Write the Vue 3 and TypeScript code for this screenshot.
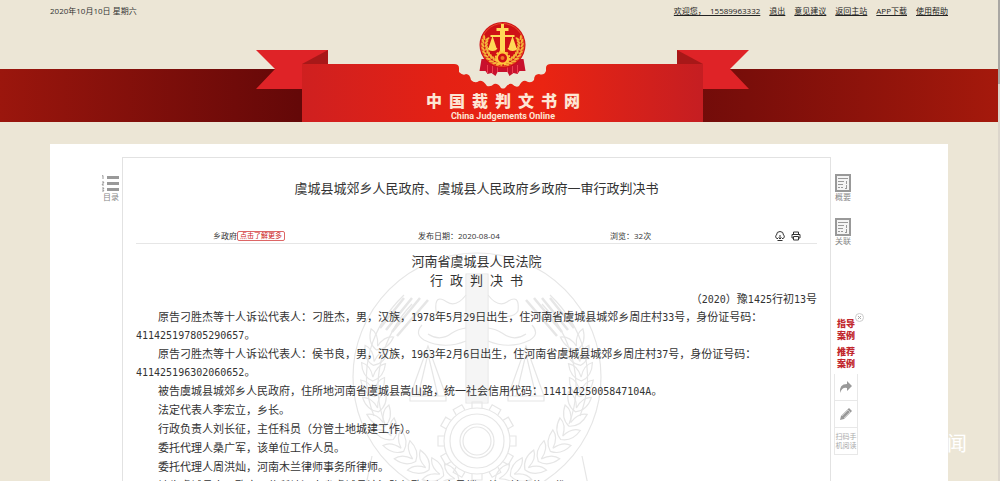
<script setup lang="ts">
interface Paragraph {
  parts: string[]
}

interface Leaf {
  x: number
  y: number
  angle: number
}

const links: string[] = ['退出', '意见建议', '返回主站', 'APP下载', '使用帮助']
const siteName: string[] = [...'中国裁判文书网']

const source: string[] = [
  '原告刁胜杰等十人诉讼代表人：刁胜杰，男，汉族，1978年5月29日出生，住河南省虞城县城郊乡周庄村33号，身份证号码：411425197805290657。',
  '原告刁胜杰等十人诉讼代表人：侯书良，男，汉族，1963年2月6日出生，住河南省虞城县城郊乡周庄村37号，身份证号码：411425196302060652。',
  '被告虞城县城郊乡人民政府，住所地河南省虞城县嵩山路，统一社会信用代码：11411425005847104A。',
  '法定代表人李宏立，乡长。',
  '行政负责人刘长征，主任科员（分管土地城建工作）。',
  '委托代理人桑广军，该单位工作人员。',
  '委托代理人周洪灿，河南木兰律师事务所律师。',
  '被告虞城县人民政府，住所地河南省虞城县漓江路行政中心六号楼，统一社会信用代码：',
]

const splitDigits = (text: string): string[] => text.split(/([0-9A-Z]+)/).filter(Boolean)
const isDigits = (part: string): boolean => /^[0-9A-Z]+$/.test(part)
const paragraphs: Paragraph[] = source.map((text) => ({ parts: splitDigits(text) }))
const caseNumber: string[] = splitDigits('（2020）豫1425行初13号')

const wreath = (cx: number, cy: number, r: number, from: number, to: number, count: number): Leaf[] =>
  Array.from({ length: count }, (_, i) => {
    const deg = from + ((to - from) * i) / (count - 1)
    const rad = (deg * Math.PI) / 180
    return { x: cx + r * Math.cos(rad), y: cy + r * Math.sin(rad), angle: deg + 90 }
  })

const bigWreath: Leaf[] = wreath(127, 127, 104, 105, 200, 12)
const smallWreath: Leaf[] = wreath(0, 0, 18, 105, 205, 10)
const teeth: number[] = Array.from({ length: 12 }, (_, i) => i * 30)
</script>

<template>
  <div class="window" lang="zh-CN">
    <div class="page">
      <header>
        <div class="topbar">
          <span>2020年10月10日 星期六</span>
          <nav>
            <a href="#">欢迎您，&nbsp; 15589963332</a>
            <a v-for="link in links" :key="link" href="#">{{ link }}</a>
          </nav>
        </div>

        <div class="banner">
          <svg class="ribbon" width="502" height="101" viewBox="248 21 502 101" aria-hidden="true">
            <defs>
              <linearGradient id="front" x1="0" x2="1" y1="0" y2="0">
                <stop offset="0" stop-color="#cf2020" />
                <stop offset="0.35" stop-color="#e42114" />
                <stop offset="0.6" stop-color="#ea2412" />
                <stop offset="1" stop-color="#c51e22" />
              </linearGradient>
            </defs>
            <path d="M256 50H328V89H256L275 69Z" fill="#df2327" />
            <path d="M749 50H677V89H749L730 69Z" fill="#df2327" />
            <path d="M328 50L302 64H328Z" fill="#a81818" />
            <path d="M677 50L703 64H677Z" fill="#a81818" />
            <path d="M440 60H565V92H440Z" fill="#ece6d6" />
            <path
              d="M302 64H454Q459 64 459 68V72Q463 76 466 74Q470 74 471 80Q475 84 479 81Q483 80 487 86Q491 87 494 84Q498 83 501 88Q503 89 505 88Q508 83 512 84Q516 88 519 86Q522 80 526 81Q531 84 534 80Q534 74 539 74Q544 76 546 71V68Q546 64 551 64H703V122H302Z"
              fill="url(#front)"
            />
            <g transform="translate(502.500 45)">
              <path d="M-21 14L-23 26L-17 26L-15 29L-11 28L-7 31L-5 27H5L7 31L11 28L15 29L17 26L23 26L21 14Z" fill="#c8112d" />
              <path d="M-15 20V28M-10 21V28M-5 22V27M5 22V27M10 21V28M15 20V28" stroke="#ee4050" fill="none" />
              <circle r="23" fill="#cf1116" />
              <circle r="21.500" fill="none" stroke="#ea4b2b" stroke-width="1" />
              <g fill="#f5b43a">
                <template v-for="side in [1, -1]" :key="side">
                  <g :transform="`scale(${side} 1)`">
                    <g v-for="(leaf, i) in smallWreath" :key="i" :transform="`translate(${leaf.x} ${leaf.y}) rotate(${leaf.angle})`">
                      <ellipse cx="0" cy="-2" rx="2.600" ry="1.100" transform="rotate(-30)" />
                      <ellipse cx="0" cy="2" rx="2.600" ry="1.100" transform="rotate(30)" />
                    </g>
                  </g>
                </template>
              </g>
              <g fill="#ffd957">
                <path d="M-1.500 -21H1.500V-17H6V-14H2.500V-10H12V-8H2.500V7H4V9H-4V7H-2.500V-8H-12V-10H-2.500V-14H-6V-17H-1.500Z" />
                <path d="M-10 -9L-14 3H-6ZM10 -9L6 3H14Z" />
                <path d="M-15 3H-5Q-6 6 -10 6Q-14 6 -15 3ZM5 3H15Q14 6 10 6Q6 6 5 3Z" />
              </g>
              <circle cy="13" r="5.500" fill="#cf1116" stroke="#ffc83d" stroke-width="2" />
              <circle cy="13" r="7" fill="none" stroke="#ffc83d" stroke-width="1.500" stroke-dasharray="2 1.700" />
              <circle cy="13" r="2" fill="#ef7a25" />
            </g>
          </svg>
          <div class="brand">
            <h1><span v-for="char in siteName" :key="char">{{ char }}</span></h1>
            <p>China Judgements Online</p>
          </div>
        </div>
      </header>

      <main>
        <aside class="left-rail">
          <button type="button" class="tool">
            <svg width="18" height="18" viewBox="0 0 18 18" aria-hidden="true">
              <path d="M6 3.500H18M6 9.500H18M6 15.500H18" stroke="#999" stroke-width="3" />
              <path d="M1 2L2 1.500V5M1 8H3L1 11H3M1 14H3L2 15.500L3 17H1" stroke="#999" fill="none" />
            </svg>
            目录
          </button>
        </aside>

        <article>
          <svg class="watermark" width="254" height="254" viewBox="0 0 254 254" aria-hidden="true">
            <path d="M117 25H137V152H117Z" fill="#f5f5f5" />
            <g fill="none" stroke="#e6e6e6" stroke-width="1.200">
              <circle cx="127" cy="127" r="124" />
              <template v-for="side in [1, -1]" :key="side">
                <g :transform="`translate(${side === 1 ? 0 : 254} 0) scale(${side} 1)`">
                  <path d="M24 166C6 120 22 76 54 45M35 174C18 130 34 84 62 54" />
                  <path
                    v-for="(leaf, i) in bigWreath"
                    :key="i"
                    :transform="`translate(${leaf.x} ${leaf.y}) rotate(${leaf.angle})`"
                    d="M-9 0Q-5 -11 9 -12Q7 -3 -5 0Q7 3 9 12Q-5 11 -9 0Z"
                  />
                  <path d="M30 78L54 48M36 80L62 48M42 82L70 48M47 86L78 50" stroke-width="2.500" />
                  <path d="M78 84Q90 92 102 83Q108 79 116 78M72 75Q64 84 74 90Q94 100 116 91" />
                  <path d="M78 96L60 146H96ZM78 104L68 146M78 104L88 146M60 146V151H96V146" />
                  <path d="M116 45Q106 58 97 52Q84 43 86 61Q90 68 104 66H116" />
                  <path d="M22 206L15 240L34 232L48 248" />
                </g>
              </template>
              <path d="M116 24H138V153H116Z" />
              <g transform="translate(127 191)">
                <path v-for="angle in teeth" :key="angle" :transform="`rotate(${angle})`" d="M-5 -33V-39H5V-33" />
                <circle r="33" />
                <circle r="27" />
                <circle r="17" />
                <circle r="14" />
              </g>
            </g>
          </svg>

          <h2>虞城县城郊乡人民政府、虞城县人民政府乡政府一审行政判决书</h2>
          <div class="meta">
            <span class="court">乡政府<button type="button" class="more">点击了解更多</button></span>
            <span>发布日期：2020-08-04</span>
            <span>浏览：32次</span>
            <span class="actions">
              <button type="button" aria-label="下载">
                <svg width="10" height="10" viewBox="0 0 10 10">
                  <path d="M3 7.500H2A2 2 0 0 1 1.500 4A3.500 3.500 0 0 1 8.500 4A2 2 0 0 1 8 7.500H7M5 4V8M3.500 6.500L5 8L6.500 6.500M2.500 9.500H7.500" />
                </svg>
              </button>
              <button type="button" aria-label="打印">
                <svg width="10" height="10" viewBox="0 0 10 10">
                  <path d="M2.500 3V1H7.500V3M2.500 7H1V3.500H9V7H7.500M2.500 5.500H7.500V9H2.500Z" />
                </svg>
              </button>
            </span>
          </div>

          <div class="document">
            <p class="heading">河南省虞城县人民法院</p>
            <p class="heading spaced"><span v-for="char in '行政判决书'" :key="char">{{ char }}</span></p>
            <p class="case">
              <template v-for="(part, i) in caseNumber" :key="i"><span v-if="isDigits(part)" class="num">{{ part }}</span><template v-else>{{ part }}</template></template>
            </p>
            <p v-for="(paragraph, n) in paragraphs" :key="n" class="para">
              <template v-for="(part, i) in paragraph.parts" :key="i"><span v-if="isDigits(part)" class="num">{{ part }}</span><template v-else>{{ part }}</template></template>
            </p>
          </div>
        </article>

        <aside class="right-rail">
          <button v-for="label in ['概要', '关联']" :key="label" type="button" class="tool">
            <svg width="16" height="18" viewBox="0 0 16 18" aria-hidden="true">
              <path d="M1 1H15V17H1Z" fill="#f4f4f4" stroke="#999" stroke-width="2" />
              <path d="M3 4.500H13M3 7.500H9M3 10.500H8M3 13.500H5M6 13.500H8M11.500 7V10M11.500 11V15M10 14.500H12" stroke="#999" fill="none" />
            </svg>
            {{ label }}
          </button>

          <div class="float">
            <button type="button" class="close" aria-label="关闭">
              <svg width="9" height="9" viewBox="0 0 9 9">
                <circle cx="4.500" cy="4.500" r="4" fill="#fff" stroke="#ccc" />
                <path d="M3 3L6 6M6 3L3 6" stroke="#aaa" />
              </svg>
            </button>
            <a href="#" class="cases">指导<br />案例</a>
            <a href="#" class="cases">推荐<br />案例</a>
            <button type="button" class="box" aria-label="分享">
              <svg width="14" height="14" viewBox="0 0 14 14">
                <path d="M1 13Q0 4 8 4V1L13 6L8 11V8Q3 7 1 13Z" fill="#999" />
              </svg>
            </button>
            <button type="button" class="box" aria-label="编辑">
              <svg width="14" height="14" viewBox="0 0 14 14">
                <path d="M1 13L2 9L10 1L13 4L5 12Z" fill="#999" />
                <path d="M3 9L9 3M5 11L11 5M8.500 2.500L11.500 5.500" stroke="#ddd" stroke-width="0.700" />
              </svg>
            </button>
            <button type="button" class="box scan">扫码手<br />机阅读</button>
          </div>
        </aside>

        <span class="stamp">闻</span>
      </main>
    </div>
    <div class="scrollbar"><div class="thumb"></div></div>
  </div>
</template>

<style>
html,
body {
  margin: 0;
  background: #ece6d6;
}
</style>

<style scoped>
.window {
  display: grid;
  grid-template-columns: 1fr 2px;
  height: 100vh;
  overflow: hidden;
  font-family: 'Open Sans', 'Noto Sans CJK SC', sans-serif;
  font-size: 8px;
  color: #333;
}

.page {
  display: flex;
  flex-direction: column;
  min-width: 0;
}

.scrollbar {
  background: #dcd6cc;
}

.thumb {
  height: 84px;
  background: #a9a7a3;
}

p,
h1,
h2 {
  margin: 0;
  font-weight: 400;
}

button {
  padding: 0;
  border: 0;
  background: none;
  font: inherit;
  color: inherit;
  cursor: pointer;
}

svg {
  display: block;
}

.topbar {
  display: flex;
  justify-content: space-between;
  padding: 0 50px;
  line-height: 21px;
}

nav {
  display: flex;
  gap: 9px;
}

nav a {
  color: #222;
  text-underline-offset: 1px;
}

.banner {
  display: grid;
  justify-items: center;
  background: linear-gradient(90deg, #9b160d, #640808 30%, #640808 60%, #7a0e0a 75%, #a5190c) 0 48px / 100% 53px no-repeat;
}

.ribbon,
.brand {
  grid-area: 1 / 1;
}

.brand {
  align-self: end;
  z-index: 1;
  padding-left: 8px;
  text-align: center;
  color: #fde6d4;
}

h1 {
  display: flex;
  gap: 7px;
  font-size: 16px;
  font-weight: 900;
  line-height: 20px;
}

.brand p {
  font: 700 9px/11px Roboto, 'Liberation Sans', sans-serif;
}

main {
  position: relative;
  display: grid;
  grid-template-columns: 72px 1fr 117px;
  flex: 1;
  margin: 22px 50px 0;
  background: #fff;
}

.left-rail {
  display: flex;
  flex-direction: column;
  align-items: flex-end;
  padding: 30px 3px 0 0;
}

.tool {
  display: flex;
  flex-direction: column;
  align-items: flex-end;
  line-height: 10px;
  color: #888;
}

article {
  position: relative;
  margin-top: 13px;
  padding: 20px 13px 0;
  border: 1px solid #e2e2e2;
  border-bottom: 0;
}

.watermark {
  position: absolute;
  top: 92px;
  left: calc(50% - 127px);
}

h2 {
  position: relative;
  font-size: 13px;
  line-height: 20px;
  text-align: center;
}

.meta {
  position: relative;
  display: grid;
  grid-template-columns: 205fr 192fr 165fr 42fr;
  align-items: center;
  height: 15px;
  margin-top: 30px;
  padding-left: 77px;
  border-bottom: 1px solid #e6e6e6;
}

.court {
  display: flex;
  align-items: center;
}

.more {
  padding: 0 2px;
  border: 1px solid #d66;
  border-radius: 2px;
  background: #fff;
  font-size: 7px;
  line-height: 8px;
  color: #c22;
}

.actions {
  display: flex;
  gap: 6px;
}

.actions path {
  fill: none;
  stroke: #333;
}

.document {
  position: relative;
  margin-top: 8px;
  font-size: 11px;
  line-height: 18px;
}

.heading {
  font-size: 13px;
  line-height: 19px;
  text-align: center;
}

.spaced {
  display: flex;
  justify-content: center;
  gap: 7px;
}

.case {
  text-align: right;
}

.para {
  margin-bottom: 1px;
  text-indent: 2em;
}

.num {
  font-family: 'DejaVu Sans Mono', monospace;
  font-size: 10px;
  line-height: 1;
}

.right-rail {
  display: flex;
  flex-direction: column;
  align-items: flex-start;
  gap: 16px;
  padding: 30px 0 0 3px;
}

.right-rail .tool {
  align-items: center;
  padding-left: 1px;
}

.float {
  position: relative;
  display: flex;
  flex-direction: column;
  width: 24px;
  margin-top: 56px;
}

.close {
  position: absolute;
  top: -5px;
  right: -6px;
}

.cases {
  margin-bottom: 4px;
  font-size: 9px;
  font-weight: 900;
  line-height: 12px;
  text-align: center;
  text-decoration: none;
  color: #c1272d;
}

.box {
  display: grid;
  place-items: center;
  height: 27px;
  border: 1px solid #e8e8e8;
  border-top: 0;
}

.scan {
  font-size: 7px;
  line-height: 9px;
  color: #aaa;
}

.stamp {
  position: absolute;
  top: 290px;
  right: -19px;
  font-size: 20px;
  line-height: 20px;
  color: #fff;
}
</style>
